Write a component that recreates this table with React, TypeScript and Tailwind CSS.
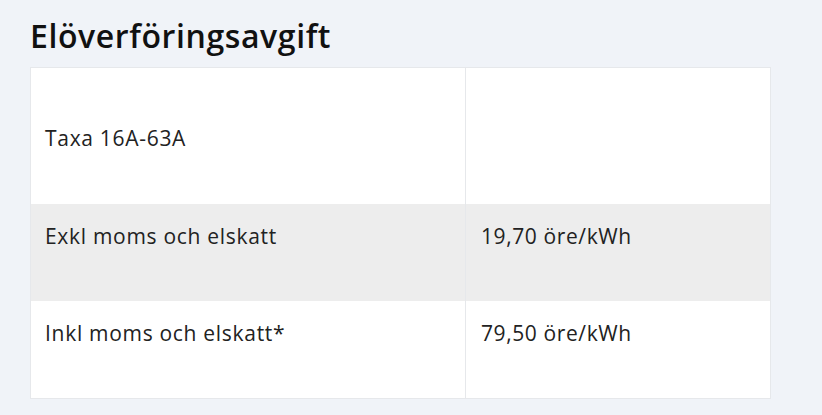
import React from "react";

export default function App() {
  const rows = [
    { a: "Taxa 16A-63A", b: "", h: "h-[136px]", pt: "pt-[56px]", bg: "bg-white" },
    { a: "Exkl moms och elskatt", b: "19,70 öre/kWh", h: "h-[97px]", pt: "pt-[18px]", bg: "bg-[#ededed]" },
    { a: "Inkl moms och elskatt*", b: "79,50 öre/kWh", h: "h-[97px]", pt: "pt-[18px]", bg: "bg-white" },
  ];
  return (
    <div className="w-[822px] h-[415px] bg-[#f0f3f8] pl-[30px] pt-[16px] text-[#222]" style={{ fontFamily: "'Open Sans', sans-serif" }}>
      <h1 className="text-[32px] font-semibold leading-[40px] tracking-[0.6px] text-[#111]">Elöverföringsavgift</h1>
      <div className="mt-[11px] w-[741px] border border-[#e6e8eb]">
        {rows.map((r, i) => (
          <div key={i} className={`flex ${r.h} ${r.bg}`}>
            <div className={`w-[435px] border-r border-[#e6e8eb] pl-[14px] ${r.pt} text-[21px] leading-[28px] tracking-[0.7px]`}>{r.a}</div>
            <div className={`flex-1 pl-[15px] ${r.pt} text-[21px] leading-[28px] tracking-[0.6px]`}>{r.b}</div>
          </div>
        ))}
      </div>
    </div>
  );
}
